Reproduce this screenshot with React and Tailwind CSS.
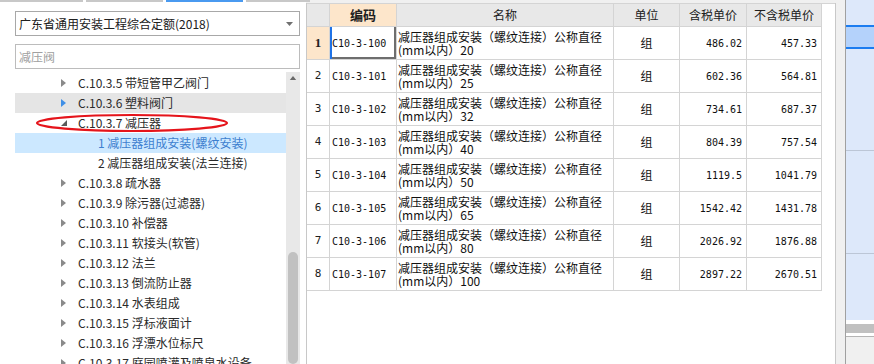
import React from 'react';

const treeItems = [
  { label: 'C.10.3.5 带短管甲乙阀门', kind: 'closed' },
  { label: 'C.10.3.6 塑料阀门', kind: 'closed', hover: true },
  { label: 'C.10.3.7 减压器', kind: 'open' },
  { label: '1 减压器组成安装(螺纹安装)', kind: 'leaf', selected: true },
  { label: '2 减压器组成安装(法兰连接)', kind: 'leaf' },
  { label: 'C.10.3.8 疏水器', kind: 'closed' },
  { label: 'C.10.3.9 除污器(过滤器)', kind: 'closed' },
  { label: 'C.10.3.10 补偿器', kind: 'closed' },
  { label: 'C.10.3.11 软接头(软管)', kind: 'closed' },
  { label: 'C.10.3.12 法兰', kind: 'closed' },
  { label: 'C.10.3.13 倒流防止器', kind: 'closed' },
  { label: 'C.10.3.14 水表组成', kind: 'closed' },
  { label: 'C.10.3.15 浮标液面计', kind: 'closed' },
  { label: 'C.10.3.16 浮漂水位标尺', kind: 'closed' },
  { label: 'C.10.3.17 庭园喷灌及喷泉水设备', kind: 'closed' },
];

const rows = [
  ['C10-3-100', '20', '486.02', '457.33'],
  ['C10-3-101', '25', '602.36', '564.81'],
  ['C10-3-102', '32', '734.61', '687.37'],
  ['C10-3-103', '40', '804.39', '757.54'],
  ['C10-3-104', '50', '1119.5', '1041.79'],
  ['C10-3-105', '65', '1542.42', '1431.78'],
  ['C10-3-106', '80', '2026.92', '1876.88'],
  ['C10-3-107', '100', '2897.22', '2670.51'],
];

const Arrow = ({ kind, hover }) => {
  if (kind === 'open') {
    return (
      <svg width="6" height="6" viewBox="0 0 6 6">
        <path d="M6 0 L6 6 L0 6 Z" fill="#5a5a5a" />
      </svg>
    );
  }
  return (
    <svg width="5" height="8" viewBox="0 0 5 8">
      <path d="M0 0 L5 4 L0 8 Z" fill={hover ? '#3f8fe6' : '#8a8a8a'} />
    </svg>
  );
};

const TreeRow = ({ item }) => {
  const bg = item.selected ? 'bg-[#cce8ff]' : item.hover ? 'bg-[#e5e5e5]' : '';
  const color = item.selected ? 'text-[#3d7fcf]' : 'text-[#2a2a2a]';
  if (item.kind === 'leaf') {
    return (
      <div className={`h-[20px] flex items-center pl-[83px] whitespace-nowrap ${bg} ${color}`}>
        {item.label}
      </div>
    );
  }
  return (
    <div className={`h-[20px] flex items-center pl-[46px] whitespace-nowrap ${bg} ${color}`}>
      <span className="w-[17px] flex items-center">
        <Arrow kind={item.kind} hover={item.hover} />
      </span>
      {item.label}
    </div>
  );
};

const cell = 'border-r border-b border-[#d4d4d4]';
const mono = "font-['DejaVu_Sans_Mono',monospace] text-[10px]";

export default function App() {
  return (
    <div className="w-[874px] h-[364px] flex overflow-hidden bg-[#f0f0f0] text-[12px] font-['Noto_Sans_CJK_SC',sans-serif]">
      {/* left: quota tree */}
      <div className="relative w-[306px] shrink-0 flex flex-col bg-white">
        <div className="h-[2px] flex gap-[3px] bg-white">
          <div className="w-[83px] bg-[#c8c8c8]" />
          <div className="w-[77px] bg-[#c8c8c8]" />
          <div className="w-[77px] bg-[#4a9af0]" />
          <div className="flex-1 bg-[#c8c8c8]" />
        </div>
        <div className="flex-1 min-h-0 flex flex-col pl-[15px] pr-[6px]">
          <div className="mt-[9px] h-[25px] flex items-center justify-between border border-[#a8a8a8] pl-[3px] pr-[6px] text-[#202020]">
            <span>广东省通用安装工程综合定额(2018)</span>
            <svg width="7" height="4" viewBox="0 0 7 4">
              <path d="M0 0 L7 0 L3.5 4 Z" fill="#707070" />
            </svg>
          </div>
          <div className="mt-[8px] h-[25px] flex items-center border border-[#bcbcbc] pl-[3px] text-[#a0a0a0]">
            减压阀
          </div>
          <div className="mt-[3px] flex-1 min-h-0 flex overflow-hidden">
            <div className="flex-1 pt-[1px]">
              {treeItems.map((item) => (
                <TreeRow key={item.label} item={item} />
              ))}
            </div>
            <div className="w-[14px] bg-[#e8e8e8] flex flex-col items-center">
              <svg className="mt-[4px]" width="8" height="5" viewBox="0 0 8 5">
                <path d="M0 5 L4 0 L8 5 Z" fill="#6a6a6a" />
              </svg>
              <div className="mt-[172px] w-[10px] h-[140px] rounded-[5px] bg-[#c1c1c1]" />
            </div>
          </div>
        </div>
        {/* red annotation ellipse */}
        <svg className="absolute left-[34px] top-[112px]" width="196" height="22" viewBox="0 0 196 22">
          <ellipse cx="98" cy="11" rx="95" ry="8" fill="none" stroke="#e5141b" strokeWidth="2.2" />
        </svg>
      </div>

      {/* middle: quota table */}
      <div className="w-[539px] shrink-0 flex flex-col">
        <div className="h-[3px] flex">
          <div className="w-[4px] h-[2px] bg-[#c8c8c8]" />
        </div>
        <div className="flex-1 flex">
          <div className="w-[529px] bg-white border-l border-[#c8c8c8]">
            <div className="grid grid-cols-[23px_67px_217px_66px_67px_75px] border-t border-[#d4d4d4]">
              <div className={`${cell} h-[23px] bg-[#e8e8e8]`} />
              <div className={`${cell} h-[23px] bg-[#fde6cb] flex items-center justify-center font-bold text-[13px] text-[#202020]`}>编码</div>
              <div className={`${cell} h-[23px] bg-[#e8e8e8] flex items-center justify-center text-[#202020]`}>名称</div>
              <div className={`${cell} h-[23px] bg-[#e8e8e8] flex items-center justify-center text-[#202020]`}>单位</div>
              <div className={`${cell} h-[23px] bg-[#e8e8e8] flex items-center justify-center text-[#202020]`}>含税单价</div>
              <div className={`${cell} h-[23px] bg-[#e8e8e8] flex items-center justify-center text-[#202020]`}>不含税单价</div>
              {rows.map((r, i) => (
                <React.Fragment key={r[0]}>
                  <div
                    className={`${cell} h-[33px] flex items-center justify-center text-[#202020] ${
                      i === 0 ? "bg-[#fde6cb] font-bold font-['Liberation_Serif',serif] text-[13px]" : "font-['DejaVu_Sans_Mono',monospace] text-[11px]"
                    }`}
                  >
                    {i + 1}
                  </div>
                  <div
                    className={`${cell} h-[33px] flex items-center pl-[2px] ${mono} text-[#101010] ${
                      i === 0 ? 'shadow-[inset_2px_0_0_#1f72e6,inset_-2px_-2px_0_#6e6e6e]' : ''
                    }`}
                  >
                    {r[0]}
                  </div>
                  <div className={`${cell} h-[33px] flex items-center pl-[1px] leading-[13px] text-[#101010] whitespace-nowrap overflow-hidden`}>
                    <span>
                      减压器组成安装（螺纹连接）公称直径
                      <br />
                      (mm以内）{r[1]}
                    </span>
                  </div>
                  <div className={`${cell} h-[33px] flex items-center justify-center text-[#101010]`}>组</div>
                  <div className={`${cell} h-[33px] flex items-center justify-end pr-[4px] ${mono} text-[#101010]`}>
                    {r[2]}
                  </div>
                  <div className={`${cell} h-[33px] flex items-center justify-end pr-[4px] ${mono} text-[#101010]`}>
                    {r[3]}
                  </div>
                </React.Fragment>
              ))}
            </div>
          </div>
          <div className="w-[10px] border-l border-[#c8c8c8]" />
        </div>
      </div>

      {/* right: collapsed side panel */}
      <div className="flex-1 flex flex-col border-l border-[#a0a0a0]">
        <div className="h-[25px] bg-[#dde8fa]" />
        <div className="h-[24px] bg-[#b4d2fb] border-y-2 border-[#1b7cf0]" />
        <div className="h-[102px] bg-[#dde8fa] border-b border-[#bcc6d6]" />
        <div className="h-[103px] bg-[#dde8fa] border-b border-[#bcc6d6]" />
        <div className="h-[66px] bg-[#dde8fa]" />
        <div className="h-[4px] bg-white" />
        <div className="h-[9px] bg-[#c0c0c0]" />
        <div className="h-[3px] bg-white" />
        <div className="h-[1px] bg-[#b4b4b4]" />
        <div className="flex-1 bg-[#f0f0f0]" />
      </div>
    </div>
  );
}
